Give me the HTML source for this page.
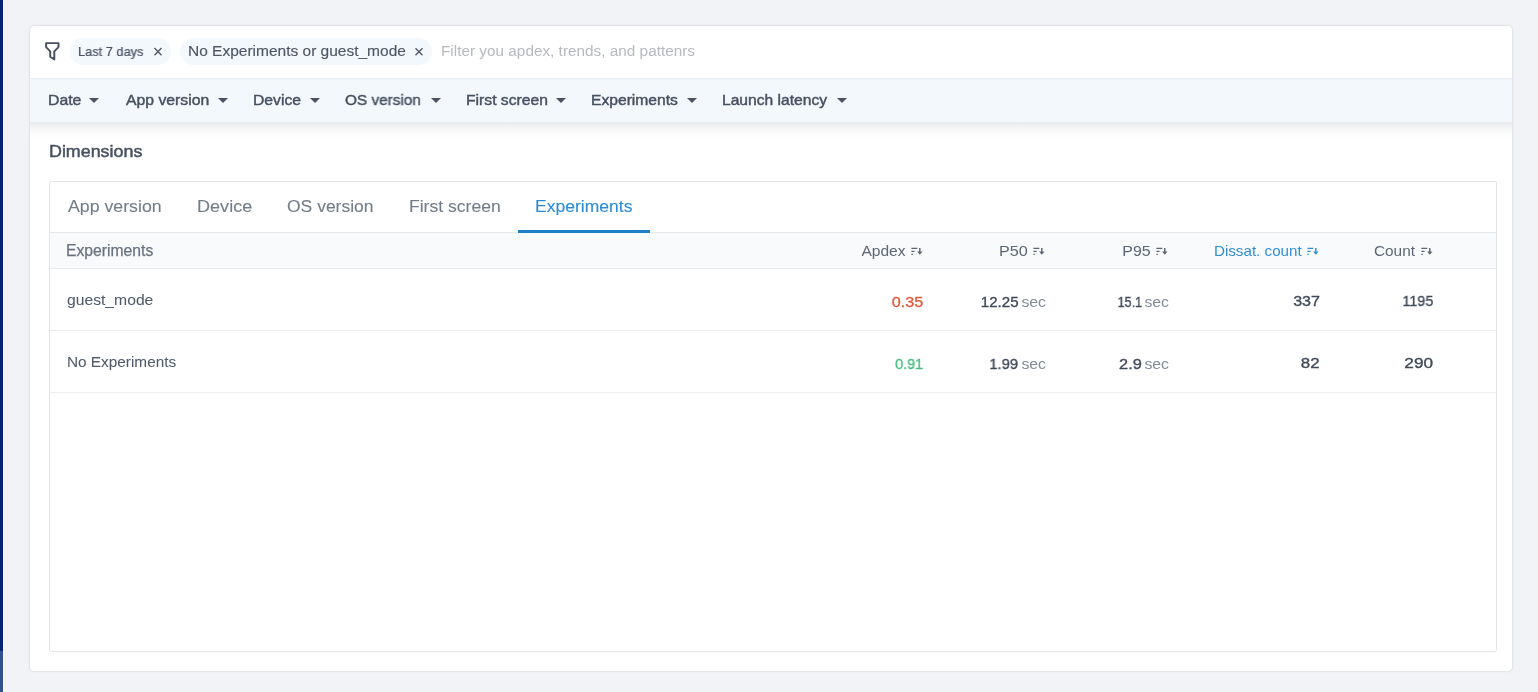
<!DOCTYPE html>
<html><head><meta charset="utf-8"><style>
html,body{margin:0;padding:0;width:1538px;height:692px;overflow:hidden;background:#f1f3f7;font-family:"Liberation Sans",sans-serif;}
.a{position:absolute;white-space:nowrap;line-height:20px;will-change:transform;}
.b{position:absolute;}
.car{position:absolute;width:0;height:0;border-left:5.1px solid transparent;border-right:5.1px solid transparent;border-top:5.7px solid #485263;}
</style></head><body>
<div class="b" style="left:0;top:0;width:2.6px;height:651px;background:#062474"></div>
<div class="b" style="left:0;top:651px;width:2.6px;height:41px;background:#33508f"></div>
<div class="b" style="left:2.6px;top:0;width:1.4px;height:692px;background:#f4f8ff"></div>
<div class="b" style="left:29px;top:25px;width:1484px;height:647px;box-sizing:border-box;border:1px solid #e2e4e8;border-radius:5px;background:#fff;box-shadow:0 0 2px rgba(0,0,0,0.06)"></div>
<svg class="b" style="left:44px;top:41px" width="17" height="21" viewBox="0 0 17 21"><path d="M2.1 2.1 H14.5 V5.4 Q14.5 6 14 6.6 L10.3 10.4 V18.4 L6.2 15.8 V10.4 L2.6 6.6 Q2.1 6 2.1 5.4 Z" fill="none" stroke="#485061" stroke-width="1.95" stroke-linejoin="round"/></svg>
<div class="b" style="left:70px;top:38px;width:101px;height:27px;border-radius:13.5px;background:#f3f8fc"></div>
<svg class="b" style="left:153px;top:47px" width="10" height="10" viewBox="0 0 10 10"><path d="M1.5 1 L8.5 8.3 M8.5 1 L1.5 8.3" stroke="#4d5666" stroke-width="1.3"/></svg>
<div class="b" style="left:180px;top:38px;width:252px;height:27px;border-radius:13.5px;background:#f3f8fc"></div>
<svg class="b" style="left:414px;top:47px" width="10" height="10" viewBox="0 0 10 10"><path d="M1.5 1.3 L8.5 8.3 M8.5 1.3 L1.5 8.3" stroke="#4d5666" stroke-width="1.3"/></svg>
<div class="b" style="left:30px;top:78px;width:1482px;height:1px;background:#e7ebf0"></div>
<div class="b" style="left:30px;top:122px;width:1482px;height:16px;background:linear-gradient(rgba(40,50,70,0.10),rgba(40,50,70,0.045) 40%,rgba(40,50,70,0))"></div>
<div class="b" style="left:30px;top:79px;width:1482px;height:43px;box-sizing:border-box;background:#f3f8fc"></div>
<div class="car" style="left:89.39999999999999px;top:97.6px"></div>
<div class="car" style="left:217.5px;top:97.6px"></div>
<div class="car" style="left:309.8px;top:97.6px"></div>
<div class="car" style="left:430.8px;top:97.6px"></div>
<div class="car" style="left:556.3px;top:97.6px"></div>
<div class="car" style="left:686.8px;top:97.6px"></div>
<div class="car" style="left:837.0999999999999px;top:97.6px"></div>
<div class="b" style="left:49px;top:181px;width:1448px;height:471px;box-sizing:border-box;border:1px solid #e3e5ea;border-radius:2px;background:#fff"></div>
<div class="b" style="left:50px;top:232px;width:1446px;height:1px;background:#e6e9ee"></div>
<div class="b" style="left:50px;top:233px;width:1446px;height:35px;background:#f9fafb"></div>
<div class="b" style="left:50px;top:268px;width:1446px;height:1px;background:#e8ebef"></div>
<div class="b" style="left:518px;top:230px;width:132px;height:3px;background:#1f80c9"></div>
<div class="b" style="left:50px;top:330px;width:1446px;height:1px;background:#eceef2"></div>
<div class="b" style="left:50px;top:392px;width:1446px;height:1px;background:#eceef2"></div>
<svg class="b" style="left:910.5px;top:247px" width="12" height="9" viewBox="0 0 12 9"><path d="M0.4 1.3 H6.3 M0.4 4.3 H3.6 M0.4 7.3 H1.8" stroke="#5c6674" stroke-width="1.35"/><path d="M8.8 0.9 V6" stroke="#5c6674" stroke-width="1.45"/><path d="M6.1 4.5 H11.5 L8.8 7.8 Z" fill="#5c6674"/></svg>
<svg class="b" style="left:1033px;top:247px" width="12" height="9" viewBox="0 0 12 9"><path d="M0.4 1.3 H6.3 M0.4 4.3 H3.6 M0.4 7.3 H1.8" stroke="#5c6674" stroke-width="1.35"/><path d="M8.8 0.9 V6" stroke="#5c6674" stroke-width="1.45"/><path d="M6.1 4.5 H11.5 L8.8 7.8 Z" fill="#5c6674"/></svg>
<svg class="b" style="left:1155.5px;top:247px" width="12" height="9" viewBox="0 0 12 9"><path d="M0.4 1.3 H6.3 M0.4 4.3 H3.6 M0.4 7.3 H1.8" stroke="#5c6674" stroke-width="1.35"/><path d="M8.8 0.9 V6" stroke="#5c6674" stroke-width="1.45"/><path d="M6.1 4.5 H11.5 L8.8 7.8 Z" fill="#5c6674"/></svg>
<svg class="b" style="left:1307px;top:247px" width="12" height="9" viewBox="0 0 12 9"><path d="M0.4 1.3 H6.3 M0.4 4.3 H3.6 M0.4 7.3 H1.8" stroke="#2f8fd4" stroke-width="1.35"/><path d="M8.8 0.9 V6" stroke="#2f8fd4" stroke-width="1.45"/><path d="M6.1 4.5 H11.5 L8.8 7.8 Z" fill="#2f8fd4"/></svg>
<svg class="b" style="left:1421px;top:247px" width="12" height="9" viewBox="0 0 12 9"><path d="M0.4 1.3 H6.3 M0.4 4.3 H3.6 M0.4 7.3 H1.8" stroke="#5c6674" stroke-width="1.35"/><path d="M8.8 0.9 V6" stroke="#5c6674" stroke-width="1.45"/><path d="M6.1 4.5 H11.5 L8.8 7.8 Z" fill="#5c6674"/></svg>
<div class="a" id="chip1" style="left:77.826px;top:41.926px;font-size:13.2px;color:#495263;-webkit-text-stroke:0.22px #495263;transform:scaleX(0.9713);transform-origin:left;">Last 7 days</div>
<div class="a" id="chip2" style="left:187.502px;top:41.264px;font-size:15.4px;color:#4d5666;-webkit-text-stroke:0.15px #4d5666;transform:scaleX(1.0066);transform-origin:left;">No Experiments or guest_mode</div>
<div class="a" id="ph" style="left:440.532px;top:40.533px;font-size:15.2px;color:#b6b9be;transform:scaleX(1.0097);transform-origin:left;">Filter you apdex, trends, and pattenrs</div>
<div class="a" id="dd1" style="left:47.609px;top:89.829px;font-size:15.5px;color:#465061;-webkit-text-stroke:0.45px #465061;transform:scaleX(1.0184);transform-origin:left;">Date</div>
<div class="a" id="dd2" style="left:125.833px;top:89.829px;font-size:15.5px;color:#465061;-webkit-text-stroke:0.45px #465061;transform:scaleX(1.017);transform-origin:left;">App version</div>
<div class="a" id="dd3" style="left:252.725px;top:89.829px;font-size:15.5px;color:#465061;-webkit-text-stroke:0.45px #465061;transform:scaleX(1.0138);transform-origin:left;">Device</div>
<div class="a" id="dd4" style="left:345.106px;top:89.829px;font-size:15.5px;color:#465061;-webkit-text-stroke:0.45px #465061;transform:scaleX(0.9892);transform-origin:left;">OS version</div>
<div class="a" id="dd5" style="left:465.726px;top:89.829px;font-size:15.5px;color:#465061;-webkit-text-stroke:0.45px #465061;transform:scaleX(1.0125);transform-origin:left;">First screen</div>
<div class="a" id="dd6" style="left:591.225px;top:89.829px;font-size:15.5px;color:#465061;-webkit-text-stroke:0.45px #465061;transform:scaleX(1.0092);transform-origin:left;">Experiments</div>
<div class="a" id="dd7" style="left:722.427px;top:89.829px;font-size:15.5px;color:#465061;-webkit-text-stroke:0.45px #465061;transform:scaleX(1.0077);transform-origin:left;">Launch latency</div>
<div class="a" id="dim" style="left:48.848px;top:142.248px;font-size:16.6px;color:#465061;-webkit-text-stroke:0.45px #465061;transform:scaleX(1.0764);transform-origin:left;">Dimensions</div>
<div class="a" id="tab1" style="left:68.433px;top:197.375px;font-size:17.1px;color:#737d8a;-webkit-text-stroke:0.1px #737d8a;transform:scaleX(1.0373);transform-origin:left;">App version</div>
<div class="a" id="tab2" style="left:196.89px;top:197.375px;font-size:17.1px;color:#737d8a;-webkit-text-stroke:0.1px #737d8a;transform:scaleX(1.0569);transform-origin:left;">Device</div>
<div class="a" id="tab3" style="left:287.197px;top:197.375px;font-size:17.1px;color:#737d8a;-webkit-text-stroke:0.1px #737d8a;transform:scaleX(1.0235);transform-origin:left;">OS version</div>
<div class="a" id="tab4" style="left:408.665px;top:197.375px;font-size:17.1px;color:#737d8a;-webkit-text-stroke:0.1px #737d8a;transform:scaleX(1.027);transform-origin:left;">First screen</div>
<div class="a" id="tab5" style="left:534.785px;top:197.375px;font-size:17.1px;color:#2b8cd3;-webkit-text-stroke:0.1px #2b8cd3;transform:scaleX(1.0252);transform-origin:left;">Experiments</div>
<div class="a" id="hx" style="left:65.668px;top:241.095px;font-size:15.6px;color:#687280;-webkit-text-stroke:0.25px #687280;transform:scaleX(1.0067);transform-origin:left;">Experiments</div>
<div class="a" id="h1" style="right:632.844px;top:241.002px;font-size:15px;color:#5c6674;transform:scaleX(1.0376);transform-origin:right;">Apdex</div>
<div class="a" id="h2" style="right:509.967px;top:241.002px;font-size:15px;color:#5c6674;transform:scaleX(1.0775);transform-origin:right;">P50</div>
<div class="a" id="h3" style="right:387.757px;top:241.002px;font-size:15px;color:#5c6674;transform:scaleX(1.061);transform-origin:right;">P95</div>
<div class="a" id="h4" style="right:236.28px;top:241.002px;font-size:15px;color:#2f8fd4;transform:scaleX(1.0125);transform-origin:right;">Dissat. count</div>
<div class="a" id="h5" style="right:122.618px;top:241.002px;font-size:15px;color:#5c6674;transform:scaleX(1.0272);transform-origin:right;">Count</div>
<div class="a" id="l1" style="left:67.223px;top:290.229px;font-size:15.5px;color:#505a69;-webkit-text-stroke:0.05px #505a69;transform:scaleX(1.0119);transform-origin:left;">guest_mode</div>
<div class="a" id="l2" style="left:67.268px;top:351.533px;font-size:15.2px;color:#505a69;-webkit-text-stroke:0.05px #505a69;transform:scaleX(1.01);transform-origin:left;">No Experiments</div>
<div class="a" id="n1" style="right:614.679px;top:291.803px;font-size:15px;color:#e05a3b;-webkit-text-stroke:0.35px #e05a3b;transform:scaleX(1.0781);transform-origin:right;">0.35</div>
<div class="a" id="n2" style="right:519.806px;top:291.803px;font-size:15px;color:#3f4959;-webkit-text-stroke:0.35px #3f4959;transform:scaleX(1.0047);transform-origin:right;">12.25</div>
<div class="a" id="s2" style="right:491.703px;top:291.872px;font-size:14.8px;color:#838c97;transform:scaleX(1.068);transform-origin:right;">sec</div>
<div class="a" id="n3" style="right:396.08px;top:291.803px;font-size:15px;color:#3f4959;-webkit-text-stroke:0.35px #3f4959;transform:scaleX(0.8433);transform-origin:right;">15.1</div>
<div class="a" id="s3" style="right:369.436px;top:291.872px;font-size:14.8px;color:#838c97;transform:scaleX(1.068);transform-origin:right;">sec</div>
<div class="a" id="n4" style="right:217.95px;top:291.202px;font-size:15px;color:#3f4959;-webkit-text-stroke:0.35px #3f4959;transform:scaleX(1.0733);transform-origin:right;">337</div>
<div class="a" id="n5" style="right:105.15px;top:291.202px;font-size:15px;color:#3f4959;-webkit-text-stroke:0.35px #3f4959;transform:scaleX(0.955);transform-origin:right;">1195</div>
<div class="a" id="m1" style="right:614.648px;top:353.803px;font-size:15px;color:#43bd7e;-webkit-text-stroke:0.35px #43bd7e;transform:scaleX(0.9608);transform-origin:right;">0.91</div>
<div class="a" id="m2" style="right:519.744px;top:353.803px;font-size:15px;color:#3f4959;-webkit-text-stroke:0.35px #3f4959;transform:scaleX(0.9895);transform-origin:right;">1.99</div>
<div class="a" id="t2" style="right:491.703px;top:353.872px;font-size:14.8px;color:#838c97;transform:scaleX(1.068);transform-origin:right;">sec</div>
<div class="a" id="m3" style="right:396.181px;top:353.803px;font-size:15px;color:#3f4959;-webkit-text-stroke:0.35px #3f4959;transform:scaleX(1.0912);transform-origin:right;">2.9</div>
<div class="a" id="t3" style="right:369.436px;top:353.872px;font-size:14.8px;color:#838c97;transform:scaleX(1.068);transform-origin:right;">sec</div>
<div class="a" id="m4" style="right:218.272px;top:352.502px;font-size:15px;color:#3f4959;-webkit-text-stroke:0.35px #3f4959;transform:scaleX(1.1275);transform-origin:right;">82</div>
<div class="a" id="m5" style="right:104.755px;top:352.803px;font-size:15px;color:#3f4959;-webkit-text-stroke:0.35px #3f4959;transform:scaleX(1.1477);transform-origin:right;">290</div>
</body></html>
